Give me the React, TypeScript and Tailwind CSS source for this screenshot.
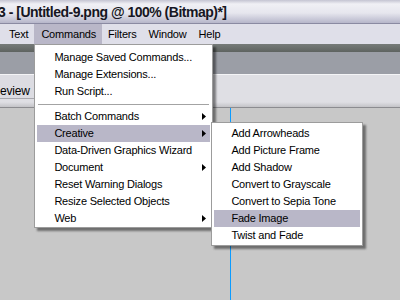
import React from 'react';

interface MenuItem {
  label: string;
  sub?: boolean;
  active?: boolean;
  sep?: boolean;
}

const mainItems: MenuItem[] = [
  { label: 'Manage Saved Commands...' },
  { label: 'Manage Extensions...' },
  { label: 'Run Script...' },
  { label: '', sep: true },
  { label: 'Batch Commands', sub: true },
  { label: 'Creative', sub: true, active: true },
  { label: 'Data-Driven Graphics Wizard' },
  { label: 'Document', sub: true },
  { label: 'Reset Warning Dialogs' },
  { label: 'Resize Selected Objects' },
  { label: 'Web', sub: true },
];

const creativeItems: MenuItem[] = [
  { label: 'Add Arrowheads' },
  { label: 'Add Picture Frame' },
  { label: 'Add Shadow' },
  { label: 'Convert to Grayscale' },
  { label: 'Convert to Sepia Tone' },
  { label: 'Fade Image', active: true },
  { label: 'Twist and Fade' },
];

const Arrow = () => (
  <svg width="4" height="7" viewBox="0 0 4 7" className="shrink-0">
    <path d="M0 0 L4 3.5 L0 7 Z" fill="#000" />
  </svg>
);

const Row: React.FC<{ item: MenuItem; indent: string }> = ({ item, indent }) => {
  if (item.sep) {
    return (
      <div className="h-[8px] flex items-center px-[1px]">
        <div className="h-px w-full bg-[#a3a3a3]" />
      </div>
    );
  }
  return (
    <div
      className={`h-[17px] leading-[17px] flex items-center pr-[4px] ${indent} ${
        item.active ? 'bg-[#b9b7c8]' : ''
      }`}
    >
      <span className="flex-1 whitespace-nowrap">{item.label}</span>
      {item.sub && <Arrow />}
    </div>
  );
};

const App: React.FC = () => {
  const menus = ['Text', 'Commands', 'Filters', 'Window', 'Help'];

  return (
    <div className="w-[400px] h-[300px] overflow-hidden flex flex-col bg-[#c8c8c8] text-black text-[11px] tracking-[-0.2px] font-[family-name:'Liberation_Sans',Arial,sans-serif]">
      {/* title bar */}
      <div className="h-[24px] shrink-0 border-b border-[#8a8aa2] bg-[linear-gradient(to_bottom,#c4c4d2_0px,#f0f0f5_4px,#e6e6ee_13px,#b6b6ca_23px)] flex items-center overflow-hidden">
        <span className="-ml-[2px] pt-[1px] whitespace-nowrap font-bold text-[14px] tracking-[-0.5px] text-[#161622]">
          3 - [Untitled-9.png @ 100% (Bitmap)*]
        </span>
      </div>

      {/* menu bar */}
      <div className="h-[20px] shrink-0 bg-[#dfdfe9] flex pl-[3px] relative z-10">
        {menus.map((m) => (
          <div
            key={m}
            className={`relative px-[6px] leading-[20px] ${m === 'Commands' ? 'bg-[#b9b7c8] pl-[7px]' : ''}`}
          >
            {m}
            {m === 'Commands' && (
              <div className="absolute left-0 top-[20px] w-[179px] bg-white border border-[#9c9c9c] pt-[4px] px-[2px] shadow-[3px_3px_2px_rgba(0,0,0,0.45)]">
                {mainItems.map((it, i) => (
                  <Row key={i} item={it} indent="pl-[17px]" />
                ))}
                <div className="absolute left-[176px] top-[77px] w-[152px] bg-white border border-[#9c9c9c] pt-[2px] pb-[1px] px-[2px] shadow-[3px_3px_2px_rgba(0,0,0,0.45)]">
                  {creativeItems.map((it, i) => (
                    <Row key={i} item={it} indent="pl-[17px]" />
                  ))}
                </div>
              </div>
            )}
          </div>
        ))}
      </div>

      {/* toolbar strips */}
      <div className="h-[8px] shrink-0 bg-[linear-gradient(to_bottom,#767b79,#5e6360)]" />
      <div className="h-[23px] shrink-0 bg-[#9b9ea6] border-b border-[#f4f4f6]" />
      <div className="h-[33px] shrink-0 flex bg-[linear-gradient(to_bottom,#dfdfe4_0px,#dfdfe4_27px,#c4c4c8_32px)] border-b border-[#8c8c90]">
        <div className="w-[37px] h-[24px] bg-[#dcdce2] border-r border-b border-[#a8a8ae] flex items-center overflow-hidden">
          <span className="pt-[8px] text-[12px] whitespace-nowrap">eview</span>
        </div>
      </div>

      {/* canvas */}
      <div className="flex-1 flex">
        <div className="ml-[230px] w-px bg-[#0b9bff]" />
      </div>
    </div>
  );
};

export default App;
